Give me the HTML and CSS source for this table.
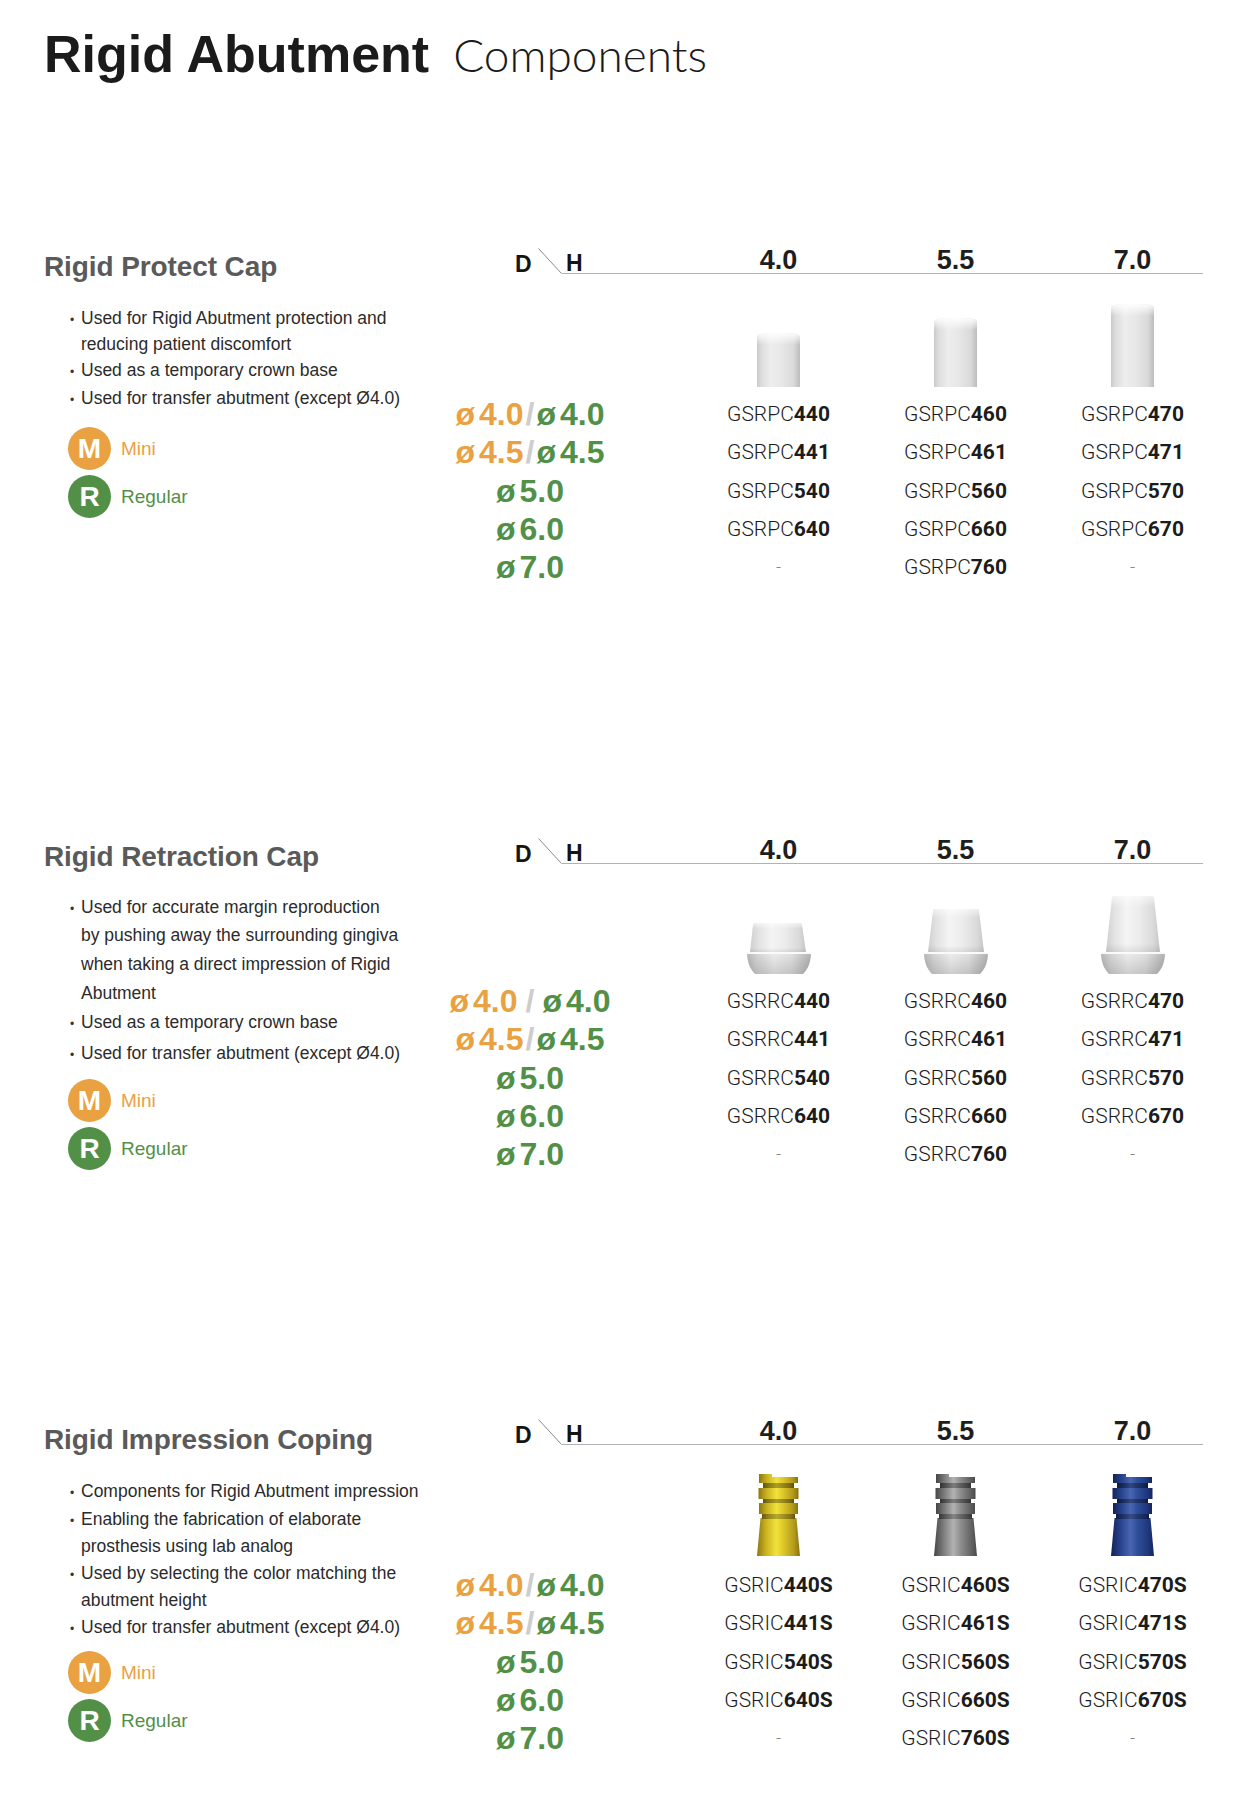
FILE: index.html
```html
<!DOCTYPE html>
<html lang="en">
<head>
<meta charset="utf-8">
<title>Rigid Abutment Components</title>
<link rel="stylesheet" href="styles.css">
</head>
<body>
<div class="page">
  <h1 class="title"><span class="title-main">Rigid Abutment</span><span class="title-sub">Components</span></h1>

  <!-- Section 1 -->
  <section class="sec sec-a">
    <div class="left">
      <h2>Rigid Protect Cap</h2>
      <ul class="bullets">
        <li><span>Used for Rigid Abutment protection and<br>reducing patient discomfort</span></li>
        <li><span>Used as a temporary crown base</span></li>
        <li><span>Used for transfer abutment (except Ø4.0)</span></li>
      </ul>
      <div class="legend">
        <div class="badge-row mini"><span class="badge">M</span><span class="label">Mini</span></div>
        <div class="badge-row reg"><span class="badge">R</span><span class="label">Regular</span></div>
      </div>
    </div>
    <div class="tbl">
      <div class="thead">
        <div class="dh"><span class="d">D</span><svg width="24" height="26" viewBox="0 0 24 26"><line x1="0.5" y1="0.5" x2="23.5" y2="25.5" stroke="#8a8a8a" stroke-width="1"/></svg></div>
        <div class="hline"><span class="h">H</span><span class="hv">4.0</span><span class="hv">5.5</span><span class="hv">7.0</span></div>
      </div>
      <div class="imgs">
        <div></div>
        <svg width="43" height="54" viewBox="0 0 43 54"><path d="M0 54 V5 Q0 1 6 0.6 Q21.5 -0.4 37 0.6 Q43 1 43 5 V54 Z" fill="url(#pcBody)"/><path d="M0 54 V5 Q0 1 6 0.6 Q21.5 -0.4 37 0.6 Q43 1 43 5 V54 Z" fill="url(#pcTop)"/></svg>
        <svg width="43" height="69" viewBox="0 0 43 69"><path d="M0 69 V5 Q0 1 6 0.6 Q21.5 -0.4 37 0.6 Q43 1 43 5 V69 Z" fill="url(#pcBody)"/><path d="M0 69 V5 Q0 1 6 0.6 Q21.5 -0.4 37 0.6 Q43 1 43 5 V69 Z" fill="url(#pcTop)"/></svg>
        <svg width="43" height="83" viewBox="0 0 43 83"><path d="M0 83 V5 Q0 1 6 0.6 Q21.5 -0.4 37 0.6 Q43 1 43 5 V83 Z" fill="url(#pcBody)"/><path d="M0 83 V5 Q0 1 6 0.6 Q21.5 -0.4 37 0.6 Q43 1 43 5 V83 Z" fill="url(#pcTop)"/></svg>
      </div>
      <div class="rows">
        <div class="dia"><span class="o"><span class="phi">ø</span>4.0</span><span class="sl">/</span><span class="g"><span class="phi">ø</span>4.0</span></div>
        <div class="code">GSRPC<b>440</b></div><div class="code">GSRPC<b>460</b></div><div class="code">GSRPC<b>470</b></div>
        <div class="dia"><span class="o"><span class="phi">ø</span>4.5</span><span class="sl">/</span><span class="g"><span class="phi">ø</span>4.5</span></div>
        <div class="code">GSRPC<b>441</b></div><div class="code">GSRPC<b>461</b></div><div class="code">GSRPC<b>471</b></div>
        <div class="dia g"><span class="phi">ø</span>5.0</div>
        <div class="code">GSRPC<b>540</b></div><div class="code">GSRPC<b>560</b></div><div class="code">GSRPC<b>570</b></div>
        <div class="dia g"><span class="phi">ø</span>6.0</div>
        <div class="code">GSRPC<b>640</b></div><div class="code">GSRPC<b>660</b></div><div class="code">GSRPC<b>670</b></div>
        <div class="dia g"><span class="phi">ø</span>7.0</div>
        <div class="code dash">-</div><div class="code">GSRPC<b>760</b></div><div class="code dash">-</div>
      </div>
    </div>
  </section>

  <!-- Section 2 -->
  <section class="sec sec-b">
    <div class="left">
      <h2>Rigid Retraction Cap</h2>
      <ul class="bullets">
        <li><span>Used for accurate margin reproduction<br>by pushing away the surrounding gingiva<br>when taking a direct impression of Rigid<br>Abutment</span></li>
        <li><span>Used as a temporary crown base</span></li>
        <li><span>Used for transfer abutment (except Ø4.0)</span></li>
      </ul>
      <div class="legend">
        <div class="badge-row mini"><span class="badge">M</span><span class="label">Mini</span></div>
        <div class="badge-row reg"><span class="badge">R</span><span class="label">Regular</span></div>
      </div>
    </div>
    <div class="tbl">
      <div class="thead">
        <div class="dh"><span class="d">D</span><svg width="24" height="26" viewBox="0 0 24 26"><line x1="0.5" y1="0.5" x2="23.5" y2="25.5" stroke="#8a8a8a" stroke-width="1"/></svg></div>
        <div class="hline"><span class="h">H</span><span class="hv">4.0</span><span class="hv">5.5</span><span class="hv">7.0</span></div>
      </div>
      <div class="imgs">
        <div></div>
        <svg width="66" height="51" viewBox="0 0 66 51">
          <path d="M7 2 Q7 0 10 0 H53 Q56 0 56 2 L60 29 H4 Z" fill="url(#rcUp)"/>
          <path d="M7 2 Q7 0 10 0 H53 Q56 0 56 2 L60 29 H4 Z" fill="url(#rcUpV)"/>
          <path d="M1 29 H65 C65 39 62 46 57 51 H9 C4 46 1 39 1 29 Z" fill="url(#rcCol)"/>
          <path d="M1 29 H65 C65 39 62 46 57 51 H9 C4 46 1 39 1 29 Z" fill="url(#shadeV)"/>
          <rect x="1" y="29" width="64" height="2" fill="#fafafa"/>
        </svg>
        <svg width="66" height="65" viewBox="0 0 66 65">
          <path d="M10 2 Q10 0 13 0 H53 Q56 0 56 2 L61 43 H5 Z" fill="url(#rcUp)"/>
          <path d="M10 2 Q10 0 13 0 H53 Q56 0 56 2 L61 43 H5 Z" fill="url(#rcUpV)"/>
          <path d="M1 43 H65 C65 53 62 60 57 65 H9 C4 60 1 53 1 43 Z" fill="url(#rcCol)"/>
          <path d="M1 43 H65 C65 53 62 60 57 65 H9 C4 60 1 53 1 43 Z" fill="url(#shadeV)"/>
          <rect x="1" y="43" width="64" height="2" fill="#fafafa"/>
        </svg>
        <svg width="66" height="78" viewBox="0 0 66 78">
          <path d="M12 2 Q12 0 15 0 H51 Q54 0 54 2 L60 56 H6 Z" fill="url(#rcUp)"/>
          <path d="M12 2 Q12 0 15 0 H51 Q54 0 54 2 L60 56 H6 Z" fill="url(#rcUpV)"/>
          <path d="M1 56 H65 C65 66 62 73 57 78 H9 C4 73 1 66 1 56 Z" fill="url(#rcCol)"/>
          <path d="M1 56 H65 C65 66 62 73 57 78 H9 C4 73 1 66 1 56 Z" fill="url(#shadeV)"/>
          <rect x="1" y="56" width="64" height="2" fill="#fafafa"/>
        </svg>
      </div>
      <div class="rows">
        <div class="dia"><span class="o"><span class="phi">ø</span>4.0</span><span class="sl wide">/</span><span class="g"><span class="phi">ø</span>4.0</span></div>
        <div class="code">GSRRC<b>440</b></div><div class="code">GSRRC<b>460</b></div><div class="code">GSRRC<b>470</b></div>
        <div class="dia"><span class="o"><span class="phi">ø</span>4.5</span><span class="sl">/</span><span class="g"><span class="phi">ø</span>4.5</span></div>
        <div class="code">GSRRC<b>441</b></div><div class="code">GSRRC<b>461</b></div><div class="code">GSRRC<b>471</b></div>
        <div class="dia g"><span class="phi">ø</span>5.0</div>
        <div class="code">GSRRC<b>540</b></div><div class="code">GSRRC<b>560</b></div><div class="code">GSRRC<b>570</b></div>
        <div class="dia g"><span class="phi">ø</span>6.0</div>
        <div class="code">GSRRC<b>640</b></div><div class="code">GSRRC<b>660</b></div><div class="code">GSRRC<b>670</b></div>
        <div class="dia g"><span class="phi">ø</span>7.0</div>
        <div class="code dash">-</div><div class="code">GSRRC<b>760</b></div><div class="code dash">-</div>
      </div>
    </div>
  </section>

  <!-- Section 3 -->
  <section class="sec sec-c">
    <div class="left">
      <h2>Rigid Impression Coping</h2>
      <ul class="bullets">
        <li><span>Components for Rigid Abutment impression</span></li>
        <li><span>Enabling the fabrication of elaborate<br>prosthesis using lab analog</span></li>
        <li><span>Used by selecting the color matching the<br>abutment height</span></li>
        <li><span>Used for transfer abutment (except Ø4.0)</span></li>
      </ul>
      <div class="legend">
        <div class="badge-row mini"><span class="badge">M</span><span class="label">Mini</span></div>
        <div class="badge-row reg"><span class="badge">R</span><span class="label">Regular</span></div>
      </div>
    </div>
    <div class="tbl">
      <div class="thead">
        <div class="dh"><span class="d">D</span><svg width="24" height="26" viewBox="0 0 24 26"><line x1="0.5" y1="0.5" x2="23.5" y2="25.5" stroke="#8a8a8a" stroke-width="1"/></svg></div>
        <div class="hline"><span class="h">H</span><span class="hv">4.0</span><span class="hv">5.5</span><span class="hv">7.0</span></div>
      </div>
      <div class="imgs">
        <div></div>
        <svg width="43" height="82" viewBox="0 0 43 82">
          <path d="M3.5 44 H39.5 L43 82 H0 Z" fill="url(#gold)"/>
          <rect x="5" y="40" width="33" height="5" fill="url(#gold)"/><rect x="5" y="40" width="33" height="5" fill="#000" opacity=".25"/>
          <rect x="2" y="29" width="39" height="11" fill="url(#gold)"/>
          <rect x="6" y="25" width="31" height="4" fill="url(#gold)"/><rect x="6" y="25" width="31" height="4" fill="#000" opacity=".3"/>
          <rect x="1.5" y="14" width="40" height="11" fill="url(#gold)"/>
          <rect x="6" y="9" width="31" height="5" fill="url(#gold)"/><rect x="6" y="9" width="31" height="5" fill="#000" opacity=".3"/>
          <path d="M2 0 H15 V3 H41 V9 H2 Z" fill="url(#gold)"/>
        </svg>
        <svg width="43" height="82" viewBox="0 0 43 82">
          <path d="M3.5 44 H39.5 L43 82 H0 Z" fill="url(#steel)"/>
          <rect x="5" y="40" width="33" height="5" fill="url(#steel)"/><rect x="5" y="40" width="33" height="5" fill="#000" opacity=".25"/>
          <rect x="2" y="29" width="39" height="11" fill="url(#steel)"/>
          <rect x="6" y="25" width="31" height="4" fill="url(#steel)"/><rect x="6" y="25" width="31" height="4" fill="#000" opacity=".3"/>
          <rect x="1.5" y="14" width="40" height="11" fill="url(#steel)"/>
          <rect x="6" y="9" width="31" height="5" fill="url(#steel)"/><rect x="6" y="9" width="31" height="5" fill="#000" opacity=".3"/>
          <path d="M2 0 H15 V3 H41 V9 H2 Z" fill="url(#steel)"/>
        </svg>
        <svg width="43" height="82" viewBox="0 0 43 82">
          <path d="M3.5 44 H39.5 L43 82 H0 Z" fill="url(#blue)"/>
          <rect x="5" y="40" width="33" height="5" fill="url(#blue)"/><rect x="5" y="40" width="33" height="5" fill="#000" opacity=".25"/>
          <rect x="2" y="29" width="39" height="11" fill="url(#blue)"/>
          <rect x="6" y="25" width="31" height="4" fill="url(#blue)"/><rect x="6" y="25" width="31" height="4" fill="#000" opacity=".3"/>
          <rect x="1.5" y="14" width="40" height="11" fill="url(#blue)"/>
          <rect x="6" y="9" width="31" height="5" fill="url(#blue)"/><rect x="6" y="9" width="31" height="5" fill="#000" opacity=".3"/>
          <path d="M2 0 H15 V3 H41 V9 H2 Z" fill="url(#blue)"/>
        </svg>
      </div>
      <div class="rows">
        <div class="dia"><span class="o"><span class="phi">ø</span>4.0</span><span class="sl">/</span><span class="g"><span class="phi">ø</span>4.0</span></div>
        <div class="code">GSRIC<b>440S</b></div><div class="code">GSRIC<b>460S</b></div><div class="code">GSRIC<b>470S</b></div>
        <div class="dia"><span class="o"><span class="phi">ø</span>4.5</span><span class="sl">/</span><span class="g"><span class="phi">ø</span>4.5</span></div>
        <div class="code">GSRIC<b>441S</b></div><div class="code">GSRIC<b>461S</b></div><div class="code">GSRIC<b>471S</b></div>
        <div class="dia g"><span class="phi">ø</span>5.0</div>
        <div class="code">GSRIC<b>540S</b></div><div class="code">GSRIC<b>560S</b></div><div class="code">GSRIC<b>570S</b></div>
        <div class="dia g"><span class="phi">ø</span>6.0</div>
        <div class="code">GSRIC<b>640S</b></div><div class="code">GSRIC<b>660S</b></div><div class="code">GSRIC<b>670S</b></div>
        <div class="dia g"><span class="phi">ø</span>7.0</div>
        <div class="code dash">-</div><div class="code">GSRIC<b>760S</b></div><div class="code dash">-</div>
      </div>
    </div>
  </section>
</div>

<svg class="defs" width="0" height="0" aria-hidden="true">
  <defs>
    <linearGradient id="pcBody" x1="0" y1="0" x2="1" y2="0">
      <stop offset="0" stop-color="#c9c9c9"/>
      <stop offset="0.1" stop-color="#dcdcdc"/>
      <stop offset="0.32" stop-color="#ededed"/>
      <stop offset="0.55" stop-color="#e8e8e8"/>
      <stop offset="0.85" stop-color="#dadada"/>
      <stop offset="1" stop-color="#bcbcbc"/>
    </linearGradient>
    <linearGradient id="pcTop" gradientUnits="userSpaceOnUse" x1="0" y1="0" x2="0" y2="12">
      <stop offset="0" stop-color="#ffffff" stop-opacity="0.95"/>
      <stop offset="1" stop-color="#ffffff" stop-opacity="0"/>
    </linearGradient>
    <linearGradient id="rcUp" x1="0" y1="0" x2="1" y2="0">
      <stop offset="0" stop-color="#cfcfcf"/>
      <stop offset="0.15" stop-color="#e2e2e2"/>
      <stop offset="0.38" stop-color="#f4f4f4"/>
      <stop offset="0.62" stop-color="#ececec"/>
      <stop offset="0.88" stop-color="#d9d9d9"/>
      <stop offset="1" stop-color="#c6c6c6"/>
    </linearGradient>
    <linearGradient id="rcUpV" x1="0" y1="0" x2="0" y2="1">
      <stop offset="0" stop-color="#ffffff" stop-opacity="0.6"/>
      <stop offset="0.2" stop-color="#ffffff" stop-opacity="0"/>
      <stop offset="0.85" stop-color="#000000" stop-opacity="0"/>
      <stop offset="1" stop-color="#000000" stop-opacity="0.08"/>
    </linearGradient>
    <linearGradient id="rcCol" x1="0" y1="0" x2="1" y2="0">
      <stop offset="0" stop-color="#b9b9b9"/>
      <stop offset="0.15" stop-color="#d6d6d6"/>
      <stop offset="0.42" stop-color="#efefef"/>
      <stop offset="0.7" stop-color="#e2e2e2"/>
      <stop offset="1" stop-color="#b4b4b4"/>
    </linearGradient>
    <linearGradient id="shadeV" x1="0" y1="0" x2="0" y2="1">
      <stop offset="0" stop-color="#000000" stop-opacity="0"/>
      <stop offset="1" stop-color="#000000" stop-opacity="0.14"/>
    </linearGradient>
    <linearGradient id="gold" x1="0" y1="0" x2="1" y2="0">
      <stop offset="0" stop-color="#8c7712"/>
      <stop offset="0.2" stop-color="#c8b11f"/>
      <stop offset="0.45" stop-color="#f2e23c"/>
      <stop offset="0.62" stop-color="#dcc62a"/>
      <stop offset="0.86" stop-color="#b29b1a"/>
      <stop offset="1" stop-color="#877210"/>
    </linearGradient>
    <linearGradient id="steel" x1="0" y1="0" x2="1" y2="0">
      <stop offset="0" stop-color="#464646"/>
      <stop offset="0.2" stop-color="#777777"/>
      <stop offset="0.45" stop-color="#b2b2b2"/>
      <stop offset="0.62" stop-color="#8e8e8e"/>
      <stop offset="0.86" stop-color="#646464"/>
      <stop offset="1" stop-color="#4a4a4a"/>
    </linearGradient>
    <linearGradient id="blue" x1="0" y1="0" x2="1" y2="0">
      <stop offset="0" stop-color="#142358"/>
      <stop offset="0.2" stop-color="#253f88"/>
      <stop offset="0.45" stop-color="#4966b3"/>
      <stop offset="0.62" stop-color="#2f4e98"/>
      <stop offset="0.86" stop-color="#1f387e"/>
      <stop offset="1" stop-color="#15255c"/>
    </linearGradient>
  </defs>
</svg>
</body>
</html>
```

FILE: styles.css
```css
html, body {
  margin: 0;
  padding: 0;
  background: #ffffff;
}

body {
  font-family: "Liberation Sans", Arial, Helvetica, sans-serif;
  color: #222222;
}

.page {
  padding: 28px 0 40px 44px;
}

/* Title */
.title {
  display: flex;
  align-items: baseline;
  gap: 24px;
  margin: 0;
  height: 52px;
  line-height: 52px;
  font-weight: normal;
}

.title-main {
  font-size: 52px;
  font-weight: 700;
  color: #1b1b1b;
}

.title-sub {
  font-family: "Lato", "Open Sans", sans-serif;
  font-weight: 300;
  font-size: 46px;
  color: #1b1b1b;
}

/* Sections */
.sec {
  display: flex;
  align-items: flex-start;
}

.sec-a { margin-top: 160px; }
.sec-b { margin-top: 243.5px; }
.sec-c { margin-top: 237.5px; }

.left {
  width: 396px;
  flex-shrink: 0;
}

.left h2 {
  margin: 10px 0 0;
  font-size: 28px;
  line-height: 34px;
  font-weight: 700;
  color: #5a5a5a;
  letter-spacing: -0.1px;
  white-space: nowrap;
}

.sec-c .left h2 { margin-top: 12px; }

.bullets {
  list-style: none;
  margin: 21px 0 0;
  padding: 0 0 0 26px;
  font-size: 17.5px;
  line-height: 26px;
  color: #2b2b2b;
  white-space: nowrap;
}

.sec-b .bullets { margin-top: 18.6px; line-height: 28.8px; }
.sec-c .bullets { margin-top: 20.6px; line-height: 26.8px; }

.bullets li {
  display: flex;
  align-items: baseline;
}

.bullets li::before {
  content: "\2022";
  width: 11px;
  flex-shrink: 0;
  font-size: 12px;
  color: #333333;
}

/* Legend */
.legend {
  display: flex;
  flex-direction: column;
  gap: 5px;
  margin-top: 14px;
  padding-left: 24px;
}

.sec-b .legend { margin-top: 10px; }
.sec-c .legend { margin-top: 9px; }

.badge-row {
  display: flex;
  align-items: center;
  gap: 10px;
  height: 43px;
}

.badge {
  width: 43px;
  height: 43px;
  border-radius: 50%;
  display: flex;
  align-items: center;
  justify-content: center;
  color: #ffffff;
  font-weight: 700;
  font-size: 28px;
  line-height: 1;
  flex-shrink: 0;
}

.label {
  font-size: 19px;
}

.mini .badge { background: #e9a142; }
.mini .label { color: #e9a142; }
.reg .badge { background: #529048; }
.reg .label { color: #529048; }

/* Table */
.tbl {
  width: 781px;
  flex-shrink: 0;
}

.thead {
  display: flex;
  height: 34px;
}

.dh {
  width: 122px;
  height: 34px;
  box-sizing: border-box;
  padding-left: 75px;
  display: flex;
  align-items: flex-end;
  flex-shrink: 0;
}

.dh .d {
  font-size: 23px;
  line-height: 23px;
  font-weight: 700;
  color: #141414;
  margin-bottom: -2px;
  flex-shrink: 0;
}

.dh svg {
  display: block;
  margin-left: 6px;
  flex-shrink: 0;
}

.hline {
  width: 641px;
  height: 34px;
  box-sizing: border-box;
  border-bottom: 1px solid #b2b2b2;
  display: grid;
  grid-template-columns: 128px repeat(3, 177px);
  align-items: end;
  flex-shrink: 0;
}

.h {
  font-size: 23px;
  line-height: 23px;
  font-weight: 700;
  color: #141414;
  padding-left: 4px;
  margin-bottom: -2px;
}

.hv {
  font-size: 27px;
  line-height: 27px;
  font-weight: 700;
  color: #1e1e1e;
  text-align: center;
  margin-bottom: -1px;
}

.imgs {
  display: grid;
  grid-template-columns: 250px repeat(3, 177px);
  height: 121px;
  box-sizing: border-box;
  padding-bottom: 8px;
  align-items: end;
  justify-items: center;
}

.sec-b .imgs { height: 118px; padding-bottom: 8px; }
.sec-c .imgs { height: 121px; padding-bottom: 10px; }

.imgs svg {
  display: block;
}

.rows {
  display: grid;
  grid-template-columns: 250px repeat(3, 177px);
  grid-auto-rows: 38.3px;
  align-items: center;
}

.dia {
  padding-right: 70px;
  text-align: center;
  font-size: 32px;
  line-height: 38px;
  font-weight: 700;
  white-space: nowrap;
}

.phi { margin-right: 4px; }
.o { color: #e9a142; }
.g { color: #529048; }
.sl {
  color: #cdcdcd;
  margin: 0 2px;
}
.sl.wide { margin: 0 8px; }

.code {
  text-align: center;
  font-family: "Roboto", "Liberation Sans", sans-serif;
  font-size: 21px;
  line-height: 38px;
  font-weight: 300;
  color: #1c1c1c;
  white-space: nowrap;
}

.code b {
  font-weight: 700;
}

.code.dash {
  color: #8a8a8a;
  font-size: 18px;
}

.defs {
  display: block;
  width: 0;
  height: 0;
  overflow: hidden;
}
```
